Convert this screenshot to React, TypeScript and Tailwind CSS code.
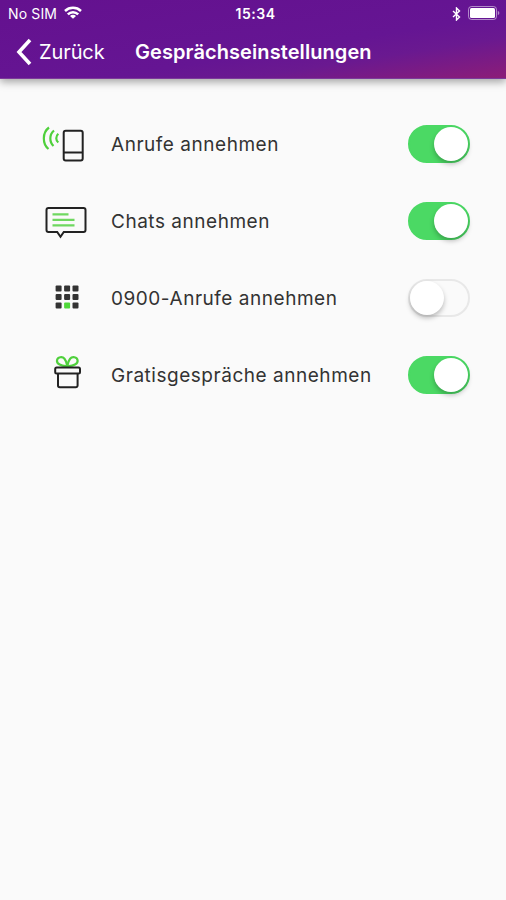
import { useState } from 'react'
import type { ReactNode } from 'react'

interface Setting {
  id: string
  label: string
  icon: ReactNode
  enabled: boolean
}

const iconProps = { width: 60, height: 59, viewBox: '0 0 60 59', fill: 'none', className: 'shrink-0' }

function PhoneIcon() {
  return (
    <svg {...iconProps}>
      <g stroke="#4fd03c" strokeWidth="2.2">
        <path d="M14 12.5C7.2 17.5 7.2 29 13.5 34" />
        <path d="M19 15.5C14.2 19.5 14.2 27 18.5 31" />
        <path d="M23.3 18.8C20.6 21.3 20.6 25.2 23.3 27.5" />
      </g>
      <rect x="28.7" y="15.8" width="19" height="29.6" rx="2" stroke="#222" strokeWidth="2" />
      <path d="M28.7 37.5h19" stroke="#222" strokeWidth="2" />
    </svg>
  )
}

function ChatIcon() {
  return (
    <svg {...iconProps}>
      <path
        d="M13.5 16h35a2 2 0 0 1 2 2v20a2 2 0 0 1-2 2H28.8l-3.3 4.8L22.2 40h-8.7a2 2 0 0 1-2-2V18a2 2 0 0 1 2-2z"
        stroke="#222"
        strokeWidth="2"
      />
      <path d="M17.5 22.3h16M17.5 27.9h22M17.5 33.4h22" stroke="#6fd860" strokeWidth="2.2" />
    </svg>
  )
}

function KeypadIcon() {
  return (
    <svg {...iconProps}>
      {[16.5, 25, 33.5].map((y, row) =>
        [20.6, 29.1, 37.5].map((x, col) => (
          <rect
            key={`${row}-${col}`}
            x={x}
            y={y}
            width="6"
            height="6"
            rx="1"
            fill={row === 2 && col === 1 ? '#4fd83a' : '#333'}
          />
        ))
      )}
    </svg>
  )
}

function GiftIcon() {
  return (
    <svg {...iconProps}>
      <g stroke="#4fd03c" strokeWidth="2.2">
        <path d="M32.3 20C26 20.5 21.5 17.5 22 14.300c.5-3.600 5.500-4 7.500-1.600 1.500 1.800 2.300 4.300 2.800 7.300z" />
        <path d="M32.3 20c6.300.5 10.800-2.500 10.300-5.700-.5-3.600-5.500-4-7.500-1.600-1.500 1.800-2.300 4.300-2.800 7.300z" />
      </g>
      <rect x="20.2" y="21.4" width="24.8" height="6" rx="1.5" stroke="#222" strokeWidth="2" />
      <path d="M23 27.5v12a1.8 1.8 0 0 0 1.8 1.8h16a1.8 1.8 0 0 0 1.8-1.8v-12" stroke="#222" strokeWidth="2" />
    </svg>
  )
}

const initialSettings: Setting[] = [
  { id: 'calls', label: 'Anrufe annehmen', icon: <PhoneIcon />, enabled: true },
  { id: 'chats', label: 'Chats annehmen', icon: <ChatIcon />, enabled: true },
  { id: 'premium', label: '0900-Anrufe annehmen', icon: <KeypadIcon />, enabled: false },
  { id: 'free', label: 'Gratisgespräche annehmen', icon: <GiftIcon />, enabled: true },
]

function Toggle({ on, label, onChange }: { on: boolean; label: string; onChange: () => void }) {
  return (
    <button
      role="switch"
      aria-checked={on}
      aria-label={label}
      onClick={onChange}
      className={`mb-[2px] flex h-[38px] w-[62px] items-center rounded-full border-2 transition-colors ${
        on ? 'justify-end border-[#4bd964] bg-[#4bd964]' : 'justify-start border-[#e8e8e8] bg-[#fafafa]'
      }`}
    >
      <span className="size-[34px] rounded-full bg-white shadow-[0_3px_5px_rgba(0,0,0,0.25)]" />
    </button>
  )
}

function StatusBar() {
  return (
    <div className="flex h-[27px] items-center pl-[8px] pr-[6px] text-[14px] leading-none">
      <div className="flex flex-1 items-center gap-[7px]">
        <span className="tracking-[0.15px]">No SIM</span>
        <svg className="-mt-[2px]" width="18" height="13" viewBox="0 0 18 13" fill="none" stroke="white" strokeWidth="2.5">
          <path d="M1 5C5.5.8 12.5.8 17 5" />
          <path d="M3.8 8.4c3-2.9 7.4-2.9 10.400 0" />
          <path d="M9 12.8 6 9.900c1.600-1.400 4.400-1.400 6 0z" fill="white" stroke="none" />
        </svg>
      </div>
      <span className="pl-[3px] text-[14px] font-semibold tracking-[0.5px]">15:34</span>
      <div className="flex flex-1 items-center justify-end gap-[7px]">
        <svg width="9" height="14" viewBox="0 0 9 14" fill="none" stroke="white" strokeWidth="1.4">
          <path d="M1 4l6.5 6-3 3V1l3 3L1 10" />
        </svg>
        <svg className="-mt-px" width="32" height="14" viewBox="0 0 32 14">
          <rect x="0.5" y="0.5" width="28" height="13" rx="3" fill="none" stroke="white" strokeOpacity="0.5" />
          <rect x="2" y="2" width="25" height="10" rx="1.5" fill="white" />
          <path d="M29.8 5c2 .6 2 3.4 0 4z" fill="white" fillOpacity="0.5" />
        </svg>
      </div>
    </div>
  )
}

export default function App() {
  const [settings, setSettings] = useState(initialSettings)

  const toggle = (id: string) => {
    setSettings(settings.map((s) => (s.id === id ? { ...s, enabled: !s.enabled } : s)))
  }

  return (
    <div className="min-h-screen w-full bg-[#fafafa] font-['Inter',sans-serif]">
      <header className="h-[79px] border-b border-[#7c3a9a] bg-[#651593] bg-[linear-gradient(171deg,#64118f_0%,#651593_60%,#6a1990_74%,#8c1d78_100%)] text-white shadow-[0_3px_8px_rgba(0,0,0,0.35)]">
        <StatusBar />
        <div className="flex h-[50px] items-center">
          <button className="flex w-[135px] items-center pl-[16px]">
            <svg width="16" height="28" viewBox="0 0 16 28" fill="none" stroke="white" strokeWidth="3.6">
              <path d="M14 2 3 14l11 12" />
            </svg>
            <span className="pl-[7px] text-[20px] tracking-[-0.1px]">Zurück</span>
          </button>
          <h1 className="text-[20px] font-semibold tracking-[0.08px]">Gesprächseinstellungen</h1>
        </div>
      </header>

      <main className="pt-[27px]">
        {settings.map((setting) => (
          <div key={setting.id} className="flex h-[77px] items-center pl-[35px] pr-[36px]">
            {setting.icon}
            <span className="flex-1 pt-[2px] pl-[16px] text-[19px] tracking-[0.53px] text-[#333]">{setting.label}</span>
            <Toggle on={setting.enabled} label={setting.label} onChange={() => toggle(setting.id)} />
          </div>
        ))}
      </main>
    </div>
  )
}
